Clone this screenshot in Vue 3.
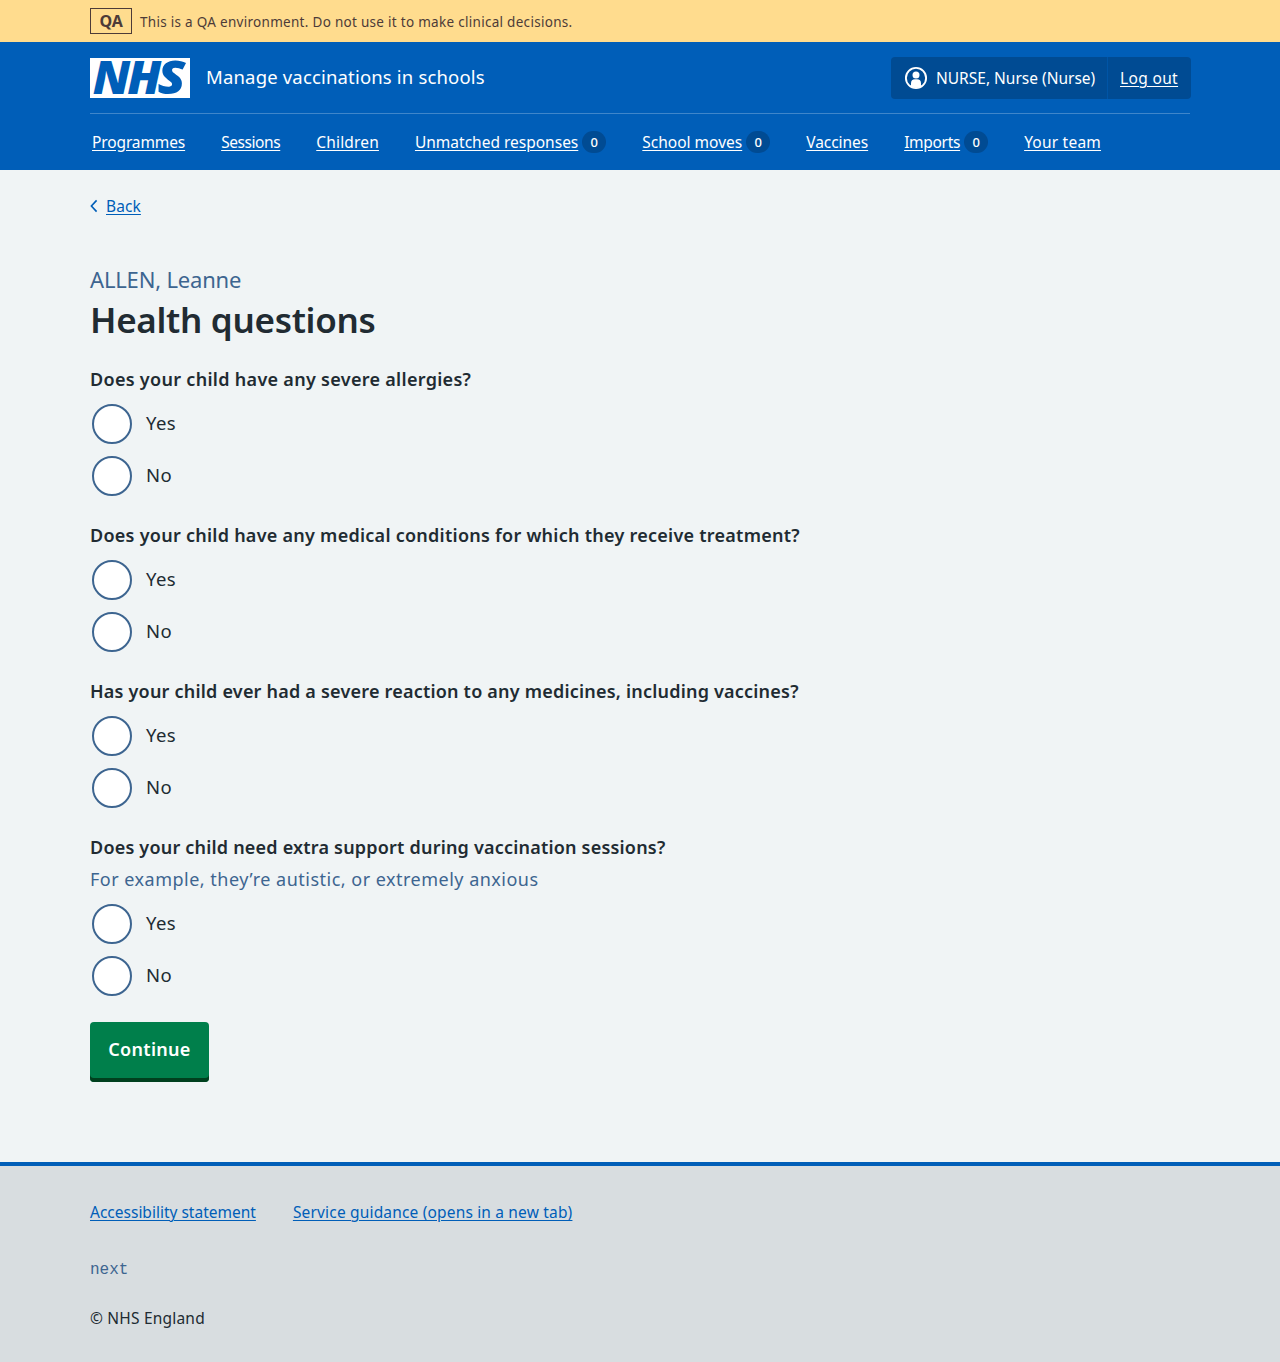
<script setup>
const navItems = [
  { label: 'Programmes', key: 'programmes' },
  { label: 'Sessions', key: 'sessions' },
  { label: 'Children', key: 'children' },
  { label: 'Unmatched responses', key: 'unmatched', count: 0 },
  { label: 'School moves', key: 'moves', count: 0 },
  { label: 'Vaccines', key: 'vaccines' },
  { label: 'Imports', key: 'imports', count: 0 },
  { label: 'Your team', key: 'team' },
]

const questions = [
  { id: 'allergies', text: 'Does your child have any severe allergies?' },
  { id: 'conditions', text: 'Does your child have any medical conditions for which they receive treatment?' },
  { id: 'reaction', text: 'Has your child ever had a severe reaction to any medicines, including vaccines?' },
  {
    id: 'support',
    text: 'Does your child need extra support during vaccination sessions?',
    hint: 'For example, they’re autistic, or extremely anxious',
  },
]
const options = ['Yes', 'No']
</script>

<template>
  <div class="page">
    <div class="env">
      <div class="container env-inner">
        <strong class="env-tag">QA</strong>
        <span class="env-text">This is a QA environment. Do not use it to make clinical decisions.</span>
      </div>
    </div>

    <header class="header">
      <div class="container">
        <div class="header-top">
          <a class="brand" href="#">
            <svg class="logo" viewBox="0 0 100 40" width="100" height="40" role="img" aria-label="NHS">
              <rect width="100" height="40" fill="#fff" />
              <text class="logo-text" y="36.2">
                <tspan x="2.8" textLength="37.5" lengthAdjust="spacingAndGlyphs">N</tspan><tspan x="37.2" textLength="34" lengthAdjust="spacingAndGlyphs">H</tspan><tspan x="67.6" textLength="28" lengthAdjust="spacingAndGlyphs">S</tspan>
              </text>
            </svg>
            <span class="service">Manage vaccinations in schools</span>
          </a>
          <div class="account">
            <div class="account-user">
              <svg width="24" height="24" viewBox="0 0 24 24" aria-hidden="true">
                <circle cx="12" cy="12" r="10.1" fill="none" stroke="#fff" stroke-width="1.9" />
                <circle cx="12" cy="8.9" r="3.5" fill="#fff" />
                <path d="M7 20.6v-3.4a4 4 0 0 1 4-4h2a4 4 0 0 1 4 4v3.4a10 10 0 0 1-10 0z" fill="#fff" />
              </svg>
              <span class="user-name">NURSE, Nurse (Nurse)</span>
            </div>
            <a class="logout" href="#">Log out</a>
          </div>
        </div>
        <nav class="nav">
          <a v-for="item in navItems" :key="item.key" class="nav-item" href="#">
            <span class="nav-label" :class="'nav-' + item.key">{{ item.label }}</span>
            <span v-if="item.count !== undefined" class="badge">{{ item.count }}</span>
          </a>
        </nav>
      </div>
    </header>

    <main class="container main">
      <a class="back" href="#">
        <svg width="8" height="14" viewBox="0 0 8 14" aria-hidden="true">
          <path d="M6.6 1.4 1.4 7l5.2 5.6" fill="none" stroke="#005eb8" stroke-width="1.6" />
        </svg>
        <span class="back-text">Back</span>
      </a>
      <h1 class="title">
        <span class="caption">ALLEN, Leanne</span>
        <span class="heading">Health questions</span>
      </h1>
      <form class="form" @submit.prevent>
        <fieldset v-for="q in questions" :key="q.id" class="question">
          <legend class="legend"><span :class="'q-' + q.id">{{ q.text }}</span></legend>
          <div v-if="q.hint" class="hint">{{ q.hint }}</div>
          <div class="radios">
            <label v-for="o in options" :key="o" class="radio">
              <input type="radio" class="radio-input" :name="q.id" :value="o" />
              <span class="radio-label">{{ o }}</span>
            </label>
          </div>
        </fieldset>
        <button class="button" type="submit">Continue</button>
      </form>
    </main>

    <footer class="footer">
      <div class="container">
        <div class="footer-links">
          <a class="link-access" href="#">Accessibility statement</a>
          <a class="link-guide" href="#">Service guidance (opens in a new tab)</a>
        </div>
        <div class="version">next</div>
        <div class="copyright">© NHS England</div>
      </div>
    </footer>
  </div>
</template>

<style>
body {
  margin: 0;
  background: #d8dde0;
}
</style>

<style scoped>
.page {
  min-height: 1362px;
  display: flex;
  flex-direction: column;
  background: #f0f4f5;
  color: #212b32;
  font-family: "Noto Sans", "Open Sans", sans-serif;
  font-size: 15.5px;
  line-height: 24px;
}
.container {
  width: 1100px;
  margin: 0 auto;
}
a {
  color: #005eb8;
  text-underline-offset: 2px;
  text-decoration-thickness: 1px;
}
.env {
  background: #ffdc8e;
  color: #4d3b38;
}
.env-inner {
  display: flex;
  align-items: center;
  gap: 8px;
  height: 42px;
}
.env-tag {
  box-sizing: border-box;
  width: 42px;
  height: 26px;
  border: 1px solid #4d3b38;
  line-height: 25px;
  font-size: 16px;
  font-weight: 700;
  letter-spacing: -0.3px;
  text-align: center;
}
.env-text {
  font-size: 13.5px;
  line-height: 20px;
  padding-top: 1px;
  letter-spacing: 0.29px;
}
.header {
  height: 128px;
  background: #005eb8;
}
.header a {
  color: #fff;
}
.header-top {
  display: flex;
  align-items: center;
  justify-content: space-between;
  height: 71px;
  border-bottom: 1px solid #3f86ca;
}
.brand {
  display: flex;
  align-items: center;
  gap: 16px;
  text-decoration: none;
}
.logo {
  display: block;
  overflow: visible;
}
.logo-text {
  font-family: "Open Sans", "Noto Sans", sans-serif;
  font-size: 45.5px;
  font-weight: 800;
  font-style: italic;
  fill: #005eb8;
}
.service {
  padding-bottom: 2px;
  font-size: 18.5px;
  letter-spacing: 0.17px;
}
.account {
  display: flex;
  height: 42px;
  margin-right: -1px;
  border-radius: 4px;
  background: #004b93;
  line-height: 42px;
}
.account-user {
  display: flex;
  align-items: center;
  gap: 8px;
  width: 203px;
  padding-left: 13px;
  color: #fff;
  white-space: nowrap;
}
.logout {
  width: 71px;
  padding-left: 12px;
  border-left: 1px solid #0055a6;
  letter-spacing: 0.35px;
  white-space: nowrap;
}
.nav {
  display: flex;
  gap: 36px;
  height: 56px;
  padding-left: 2px;
  align-items: center;
}
.nav-item {
  display: flex;
  align-items: center;
  gap: 4px;
  text-decoration: none;
  white-space: nowrap;
}
.nav-label {
  text-decoration: underline;
  text-underline-offset: 2px;
}
.nav-programmes {
  letter-spacing: -0.12px;
}
.nav-sessions {
  letter-spacing: -0.42px;
}
.nav-children {
  letter-spacing: 0.17px;
}
.nav-vaccines {
  letter-spacing: -0.05px;
}
.nav-imports {
  letter-spacing: -0.3px;
}
.nav-team {
  letter-spacing: 0.22px;
}
.badge {
  width: 24px;
  height: 22px;
  border-radius: 11px;
  background: #004b93;
  font-size: 13px;
  font-weight: 500;
  line-height: 23px;
  text-align: center;
}
.main {
  flex: 1;
}
.back {
  display: flex;
  align-items: center;
  gap: 8px;
  width: 60px;
  margin-top: 24px;
  text-decoration: none;
}
.back-text {
  text-decoration: underline;
  letter-spacing: 0.1px;
}
.title {
  display: flex;
  flex-direction: column;
  margin: 45px 0 0;
}
.caption {
  color: #3d6590;
  font-size: 22px;
  font-weight: 400;
  letter-spacing: -0.18px;
  line-height: 32px;
}
.heading {
  padding-top: 1px;
  font-size: 35px;
  font-weight: 650;
  letter-spacing: -0.3px;
  line-height: 48px;
}
.form {
  padding-top: 21px;
}
.question {
  margin: 0 0 25px;
  padding: 0;
  border: 0;
  min-width: 0;
}
.legend {
  padding: 0;
  margin-bottom: 11px;
  font-size: 18px;
  font-weight: 650;
  line-height: 28px;
  white-space: nowrap;
}
.q-allergies {
  letter-spacing: 0.3px;
}
.q-conditions {
  letter-spacing: 0.26px;
}
.q-reaction {
  letter-spacing: 0.21px;
}
.q-support {
  letter-spacing: 0.2px;
}
.hint {
  margin: -8px 0 11px;
  padding-top: 1px;
  margin-top: -7px;
  margin-bottom: 11px;
  color: #3d6590;
  font-size: 18px;
  letter-spacing: 0.49px;
  line-height: 27px;
}
.radios {
  display: flex;
  flex-direction: column;
  gap: 12px;
  padding-left: 2px;
}
.radio {
  display: flex;
  align-items: center;
  gap: 14px;
  height: 40px;
}
.radio-input {
  appearance: none;
  box-sizing: border-box;
  width: 40px;
  height: 40px;
  margin: 0;
  border: 2px solid #3d6590;
  border-radius: 50%;
  background: #fff;
}
.radio-label {
  padding-bottom: 2px;
  font-size: 18.5px;
  letter-spacing: 0.4px;
}
.button {
  display: block;
  width: 119px;
  height: 60px;
  margin-top: 26px;
  padding: 0 0 6px;
  border: 0;
  border-radius: 4px;
  background: #007f4b;
  box-shadow: inset 0 -4px 0 #00401e;
  color: #fff;
  font: 650 18px/28px "Noto Sans", sans-serif;
  letter-spacing: 0.3px;
}
.footer {
  box-sizing: border-box;
  height: 200px;
  padding-top: 34px;
  border-top: 4px solid #005eb8;
  background: #d8dde0;
}
.footer-links {
  display: flex;
  gap: 37px;
}
.link-guide {
  letter-spacing: 0.17px;
}
.version {
  margin-top: 34px;
  color: #3d6590;
  font-family: "Liberation Mono", monospace;
  font-size: 16px;
}
.copyright {
  margin-top: 24px;
  letter-spacing: 0.2px;
}
</style>
